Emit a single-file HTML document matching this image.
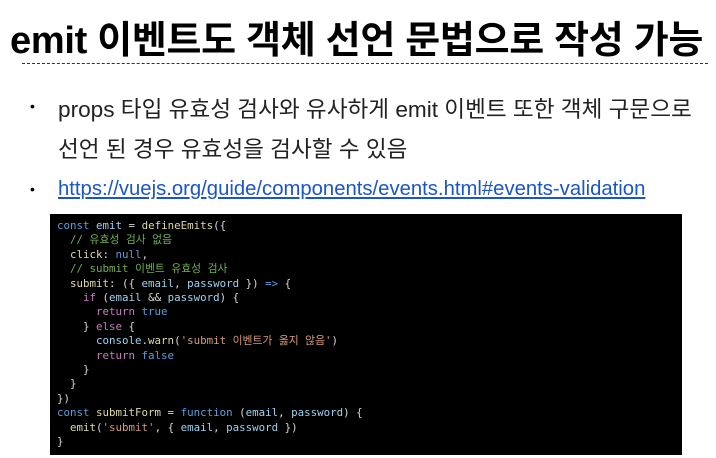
<!DOCTYPE html>
<html><head><meta charset="utf-8"><style>
body{margin:0;width:716px;height:458px;background:#fff;overflow:hidden;font-family:"Liberation Sans","Noto Sans CJK KR",sans-serif;position:relative}
.t{position:absolute;left:10px;top:9px;font-size:38px;font-weight:bold;letter-spacing:-0.3px;white-space:nowrap;color:#000}
.dash{position:absolute;left:22px;top:63px;width:686px;border-top:1.5px dashed #333}
.b{position:absolute;font-size:22.6px;color:#222;white-space:nowrap}
.dot{position:absolute;left:30px;font-size:14px}
a{color:#1a55c9;text-decoration:underline;font-size:20.3px}
.code{position:absolute;left:50px;top:214px;width:632px;height:241px;background:#000;}
pre{margin:0;position:absolute;left:7px;top:5px;font-family:"DejaVu Sans Mono","Noto Sans CJK KR",monospace;font-size:10.8px;line-height:14.4px;color:#d8d8d8}
.k{color:#5a9ee0}.c{color:#6fb04f}.p{color:#c77bbf}.s{color:#d79a78}.f{color:#e0d9a8}.v{color:#9cd2f0}
</style></head><body>
<div class="t">emit 이벤트도 객체 선언 문법으로 작성 가능</div>
<div class="dash"></div>
<div class="dot" style="top:98px">•</div>
<div class="b" style="left:58px;top:91px">props 타입 유효성 검사와 유사하게 emit 이벤트 또한 객체 구문으로</div>
<div class="b" style="left:58px;top:131px">선언 된 경우 유효성을 검사할 수 있음</div>
<div class="dot" style="top:181px">•</div>
<div class="b" style="left:58px;top:175px"><a>https://vuejs.org/guide/components/events.html#events-validation</a></div>
<div class="code"><pre><span class="k">const</span> <span class="v">emit</span> = <span class="f">defineEmits</span>({
  <span class="c">// 유효성 검사 없음</span>
  <span class="f">click</span>: <span class="k">null</span>,
  <span class="c">// submit 이벤트 유효성 검사</span>
  <span class="f">submit</span>: ({ <span class="v">email</span>, <span class="v">password</span> }) <span class="k">=&gt;</span> {
    <span class="p">if</span> (<span class="v">email</span> &amp;&amp; <span class="v">password</span>) {
      <span class="p">return</span> <span class="k">true</span>
    } <span class="p">else</span> {
      <span class="v">console</span>.<span class="f">warn</span>(<span class="s">'submit 이벤트가 옳지 않음'</span>)
      <span class="p">return</span> <span class="k">false</span>
    }
  }
})
<span class="k">const</span> <span class="f">submitForm</span> = <span class="k">function</span> (<span class="v">email</span>, <span class="v">password</span>) {
  <span class="f">emit</span>(<span class="s">'submit'</span>, { <span class="v">email</span>, <span class="v">password</span> })
}</pre></div>
</body></html>
